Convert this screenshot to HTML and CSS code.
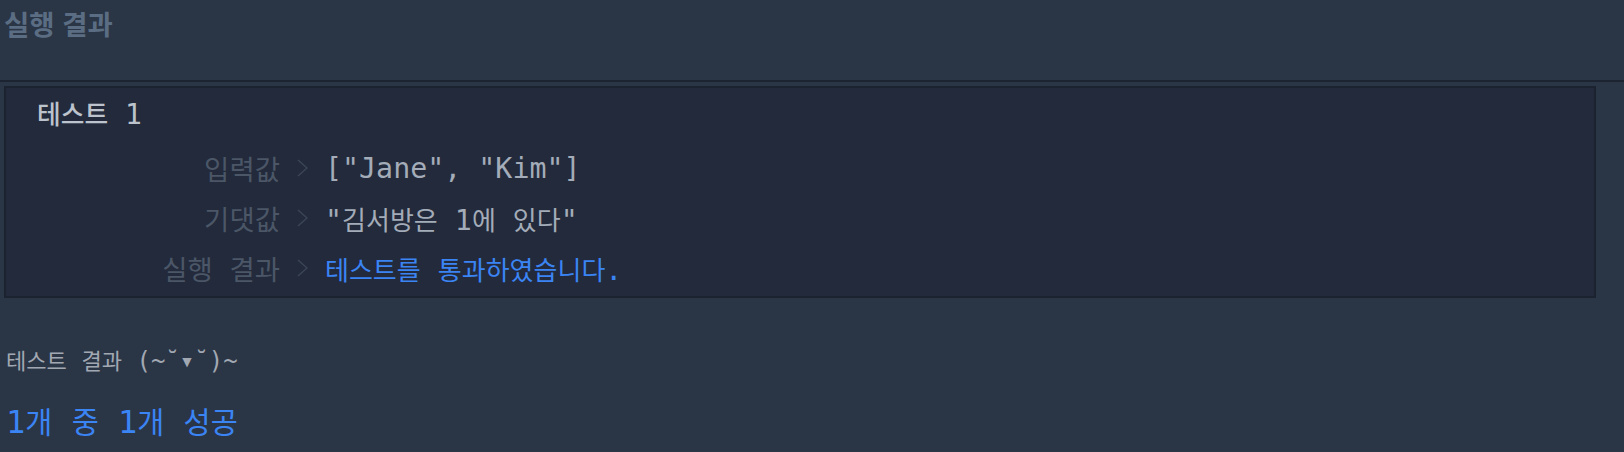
FILE: index.html
```html
<!DOCTYPE html>
<html lang="ko">
<head>
<meta charset="utf-8">
<title>실행 결과</title>
<link rel="stylesheet" href="styles.css">
</head>
<body>
<div class="panel">
  <div class="panel-head">
    <h2 class="panel-title">실행 결과</h2>
  </div>
  <div class="panel-body">
    <section class="test-case">
      <h3 class="case-title"><span class="ko">테스트</span> 1</h3>
      <div class="case-rows">
        <div class="row">
          <span class="label">입력값</span>
          <svg class="chev" viewBox="0 0 11 18" width="11" height="18"><polyline points="1,1 10,9 1,17"/></svg>
          <span class="value">["Jane", "Kim"]</span>
        </div>
        <div class="row">
          <span class="label">기댓값</span>
          <svg class="chev" viewBox="0 0 11 18" width="11" height="18"><polyline points="1,1 10,9 1,17"/></svg>
          <span class="value">"<span class="ko">김서방은</span> 1<span class="ko">에</span> <span class="ko">있다</span>"</span>
        </div>
        <div class="row">
          <span class="label">실행 결과</span>
          <svg class="chev" viewBox="0 0 11 18" width="11" height="18"><polyline points="1,1 10,9 1,17"/></svg>
          <span class="value pass"><span class="ko">테스트를</span> <span class="ko">통과하였습니다</span>.</span>
        </div>
      </div>
    </section>
    <div class="summary">
      <p class="summary-title"><span class="ko">테스트</span> <span class="ko">결과</span> (~˘▾˘)~</p>
      <p class="summary-count">1<span class="ko">개</span> <span class="ko">중</span> 1<span class="ko">개</span> <span class="ko">성공</span></p>
    </div>
  </div>
</div>
</body>
</html>
```

FILE: styles.css
```css
* {
  box-sizing: border-box;
  margin: 0;
  padding: 0;
}

html,
body {
  background: #2a3546;
}

body {
  width: 1624px;
  height: 452px;
  overflow: hidden;
  font-family: "DejaVu Sans Mono", "Noto Sans CJK KR", monospace;
}

.panel-head {
  height: 82px;
  padding: 0 4px;
  border-bottom: 2px solid #1c2432;
}

.panel-title {
  font-family: "Noto Sans CJK KR", sans-serif;
  font-weight: 700;
  font-size: 27.5px;
  line-height: 46px;
  color: #5b6d83;
}

.panel-body {
  padding: 4px 28px 0 4px;
}

.test-case {
  height: 212px;
  padding: 7px 0 0 31px;
  background: #222a3b;
  border: 2px solid #1b2230;
}

.ko {
  font-size: 0.92em;
}

.case-title {
  font-weight: 500;
  font-size: 28px;
  line-height: 40px;
  color: #bcc3cd;
}

.case-rows {
  margin-top: 8px;
}

.row {
  display: flex;
  align-items: center;
  height: 50px;
}

.label {
  width: 243px;
  text-align: right;
  font-size: 27.5px;
  color: #4b5667;
  white-space: nowrap;
}

.chev {
  flex: none;
  margin: 0 17px 0 17px;
  fill: none;
  stroke: #3b4557;
  stroke-width: 1.5;
}

.value {
  font-size: 28.3px;
  color: #a3acb8;
  white-space: pre;
}

.value.pass {
  color: #3b84f4;
}

.summary {
  padding: 43px 0 0 2px;
}

.summary-title {
  font-size: 24px;
  line-height: 40px;
  color: #a1a8b2;
  white-space: pre;
}

.summary-count {
  margin-top: 15px;
  font-size: 32px;
  line-height: 50px;
  color: #3b84f4;
  white-space: pre;
}
```
